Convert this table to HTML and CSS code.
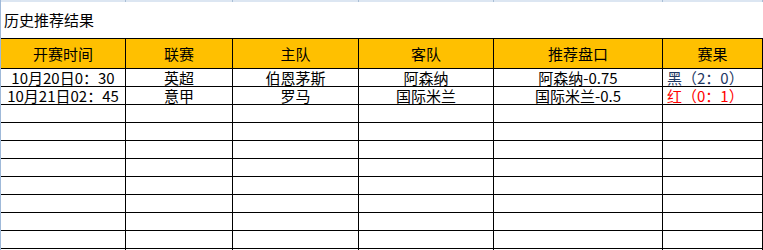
FILE: index.html
```html
<!DOCTYPE html>
<html lang="zh-CN">
<head>
    <meta charset="UTF-8">
    <meta name="viewport" content="width=device-width, initial-scale=1.0">
    <title>历史推荐结果</title>
    <link rel="stylesheet" href="styles.css">
</head>
<body>
    <div class="sheet">
        <div class="row-edge"></div>
        <div class="page">
            <div class="col-strip">
                <span class="c1"></span><span class="c2"></span><span class="c3"></span><span class="c4"></span><span class="c5"></span><span class="c6"></span>
            </div>
            <div class="title">历史推荐结果</div>
            <table class="history">
                <colgroup>
                    <col class="c1"><col class="c2"><col class="c3"><col class="c4"><col class="c5"><col class="c6">
                </colgroup>
                <thead>
                    <tr>
                        <th>开赛时间</th>
                        <th>联赛</th>
                        <th>主队</th>
                        <th>客队</th>
                        <th>推荐盘口</th>
                        <th>赛果</th>
                    </tr>
                </thead>
                <tbody>
                    <tr>
                        <td>10月20日0：30</td>
                        <td>英超</td>
                        <td>伯恩茅斯</td>
                        <td>阿森纳</td>
                        <td>阿森纳-0.75</td>
                        <td class="result lose">黑（2：0）</td>
                    </tr>
                    <tr>
                        <td>10月21日02：45</td>
                        <td>意甲</td>
                        <td>罗马</td>
                        <td>国际米兰</td>
                        <td>国际米兰-0.5</td>
                        <td class="result win">红（0：1）</td>
                    </tr>
                    <tr><td></td><td></td><td></td><td></td><td></td><td></td></tr>
                    <tr><td></td><td></td><td></td><td></td><td></td><td></td></tr>
                    <tr><td></td><td></td><td></td><td></td><td></td><td></td></tr>
                    <tr><td></td><td></td><td></td><td></td><td></td><td></td></tr>
                    <tr><td></td><td></td><td></td><td></td><td></td><td></td></tr>
                    <tr><td></td><td></td><td></td><td></td><td></td><td></td></tr>
                    <tr><td></td><td></td><td></td><td></td><td></td><td></td></tr>
                    <tr><td></td><td></td><td></td><td></td><td></td><td></td></tr>
                    <tr><td></td><td></td><td></td><td></td><td></td><td></td></tr>
                </tbody>
            </table>
        </div>
    </div>
</body>
</html>
```

FILE: styles.css
```css
body {
    margin: 0;
    padding: 0;
    background: #ffffff;
    font-family: "Noto Sans CJK SC", "Noto Sans", sans-serif;
    font-size: 15px;
    color: #000;
}
.sheet {
    display: flex;
    width: 763px;
    height: 250px;
    overflow: hidden;
}
.row-edge {
    width: 1px;
    flex-shrink: 0;
    background: #9fb9d9;
}
.page {
    width: 762px;
}
.c1 { width: 125px; }
.c2 { width: 107px; }
.c3 { width: 126px; }
.c4 { width: 135px; }
.c5 { width: 169px; }
.c6 { width: 100px; }
.col-strip {
    display: flex;
    height: 2px;
}
.col-strip span {
    box-sizing: border-box;
    height: 2px;
    background: #dce6f2;
    border-right: 1px solid #a9bfd6;
}
.title {
    height: 36px;
    line-height: 36px;
    padding-left: 3px;
}
.history {
    width: 762px;
    table-layout: fixed;
    border-collapse: separate;
    border-spacing: 0;
    border-top: 1px solid #000;
}
.history th, .history td {
    padding: 0;
    border-right: 1px solid #000;
    border-bottom: 1px solid #000;
    text-align: center;
    white-space: nowrap;
    line-height: 17px;
}
.history th {
    background-color: #ffc000;
    font-weight: normal;
}
.history thead tr {
    height: 30px;
}
.history tbody tr {
    height: 18px;
}
.history .result {
    text-align: left;
    padding-left: 4px;
}
.lose {
    color: #1f3864;
}
.win {
    color: #ff0000;
}
```
